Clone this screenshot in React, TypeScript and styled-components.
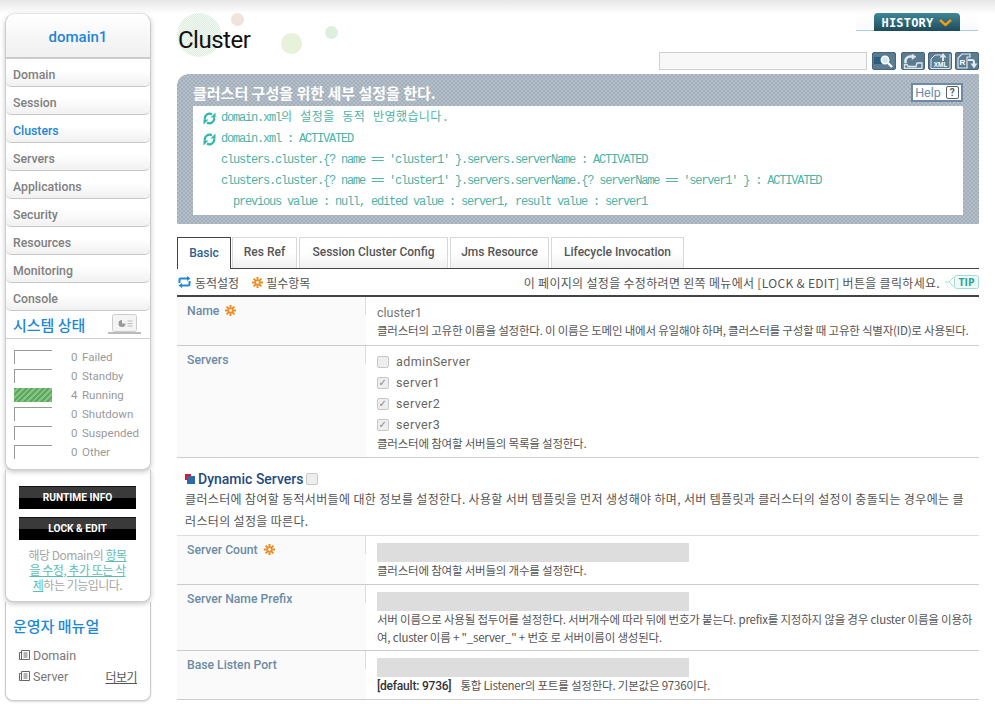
import React from "react";
import styled, { createGlobalStyle } from "styled-components";

const BASE = `Roboto, "Noto Sans CJK KR", sans-serif`;
const KR = `"Noto Sans CJK KR", Roboto, sans-serif`;
const MONO = `"Liberation Mono", "Noto Sans CJK KR", monospace`;

const Global = createGlobalStyle`
  html, body { margin: 0; padding: 0; height: 704px; overflow: hidden; background: #fff; }
  body {
    font-family: ${BASE};
    font-size: 12px;
    background: linear-gradient(#e6e6e6, #fff) no-repeat 0 0 / 100% 14px #fff;
  }
  * { box-sizing: border-box; }
`;

const Page = styled.div`
  display: flex;
  align-items: flex-start;
  padding: 13px 16px 0 5px;
  gap: 26px;
  width: 995px;
`;

const Sidebar = styled.aside`
  width: 146px;
  flex: none;
  display: flex;
  flex-direction: column;
`;
const NavCard = styled.div`
  background: #fff;
  border: 1px solid #ccc;
  border-top: 1px solid #e5e5e5;
  border-radius: 10px 10px 8px 8px;
  box-shadow: 0 2px 5px rgba(0, 0, 0, 0.22);
  position: relative;
  z-index: 2;
`;
const DomainHead = styled.div`
  height: 45px;
  padding-top: 2px;
  display: flex;
  align-items: center;
  justify-content: center;
  color: #1c87d8;
  font: 500 15px ${BASE};
  border-radius: 10px 10px 0 0;
  border-bottom: 2px solid #ccc;
  background: linear-gradient(#fff, #f0f0f0);
`;
const NavItem = styled.div<{ $active?: boolean }>`
  height: 28px;
  padding: 4px 0 0 7px;
  display: flex;
  align-items: center;
  font: 500 12.3px ${BASE};
  color: ${(p) => (p.$active ? "#1c87d8" : "#808080")};
  background: linear-gradient(#fff 40%, #f1f1f1);
  border-bottom: 1px solid #c8c8c8;
  border-radius: 0 0 5px 5px;
`;
const StatusHead = styled.div`
  height: 28px;
  border-bottom: 1px solid #d0d0d0;
  display: flex;
  align-items: center;
  justify-content: space-between;
  padding: 0 9px 1px 7px;
  color: #1c87d8;
  font: 500 15px ${KR};
`;
const StatusList = styled.div`
  padding: 11px 0 10px 8px;
  display: flex;
  flex-direction: column;
  gap: 5px;
`;
const StatusRow = styled.div`
  display: flex;
  align-items: center;
  height: 14px;
  color: #9a9a9a;
  font-size: 11.5px;
`;
const Bar = styled.div<{ $on?: boolean }>`
  width: 38px;
  height: 14px;
  border-top: 1px solid #999;
  border-left: 1px solid #999;
  margin-right: 19px;
  ${(p) =>
    p.$on
      ? `border: 0; background: repeating-linear-gradient(135deg,#5fa85f 0 2px,#86c586 2px 4px);`
      : ""}
`;
const Count = styled.span`
  width: 11px;
  margin-bottom: 1px;
`;
const StatusName = styled.span`
  margin-bottom: 1px;
`;

const ActionCard = styled.div`
  background: #fff;
  border: 1px solid #ccc;
  border-top: 0;
  border-radius: 0 0 8px 8px;
  box-shadow: 0 2px 5px rgba(0, 0, 0, 0.22);
  padding: 16px 1px 9px 0;
  display: flex;
  flex-direction: column;
  align-items: center;
  gap: 8px;
  position: relative;
  z-index: 1;
`;
const BlackButton = styled.div`
  width: 117px;
  height: 23px;
  border-top: 1px solid #111;
  background: linear-gradient(#3a3a3a 50%, #000 50%);
  color: #fff;
  font: 700 10.2px/22px ${BASE};
  text-align: center;
`;
const ActionNote = styled.p`
  margin: -1px 0 0;
  width: 104px;
  text-align: center;
  color: #a5a5a5;
  font: 12px/15px ${KR};
  letter-spacing: -0.5px;
  a {
    color: #5cbdb5;
    text-decoration: underline;
  }
`;
const ManualCard = styled.div`
  background: #fff;
  border: 1px solid #ccc;
  border-top: 0;
  border-radius: 0 0 8px 8px;
  height: 99px;
  padding: 14px 13px 0 7px;
  box-shadow: 0 1px 2px rgba(0, 0, 0, 0.15);
`;
const ManualTitle = styled.div`
  color: #1c87d8;
  font: 500 15px/20px ${KR};
  margin-bottom: 9px;
`;
const ManualRow = styled.div`
  display: flex;
  align-items: center;
  gap: 3px;
  height: 21px;
  padding-left: 6px;
  color: #777;
  font-size: 12.5px;
`;
const More = styled.span`
  margin-left: auto;
  color: #555;
  text-decoration: underline;
  font: 12px ${KR};
  letter-spacing: -0.5px;
`;

const Main = styled.main`
  width: 802px;
  flex: none;
`;
const Header = styled.header`
  position: relative;
  height: 61px;
  display: flex;
  flex-direction: column;
  align-items: flex-end;
`;
const Title = styled.h1`
  position: absolute;
  left: 1px;
  top: 11px;
  margin: 0;
  color: #111;
  font: 400 24px/32px ${BASE};
  letter-spacing: -0.5px;
  z-index: 1;
`;
const Dot = styled.span<{ $x: number; $y: number; $s: number; $c: string }>`
  position: absolute;
  left: ${(p) => p.$x}px;
  top: ${(p) => p.$y}px;
  width: ${(p) => p.$s}px;
  height: ${(p) => p.$s}px;
  border-radius: 50%;
  background: ${(p) => p.$c};
`;
const BigDot = styled(Dot)`
  background: repeating-conic-gradient(#dbecdd 0 25%, #f6faf6 0 50%) 0 0 / 2px 2px;
`;
const HistoryWrap = styled.div`
  width: 122px;
  margin-right: 1px;
  height: 18px;
  display: flex;
  justify-content: center;
  border-bottom: 1px solid #a8d0dc;
  background: linear-gradient(#fff, #fafafa);
`;
const HistoryTab = styled.div`
  width: 86px;
  height: 18px;
  padding-top: 1px;
  display: flex;
  align-items: center;
  justify-content: center;
  gap: 6px;
  border-radius: 4px 4px 0 0;
  background: linear-gradient(#3f8799, #1d4b5b);
  color: #fff;
  font: 700 12px "DejaVu Sans Mono", monospace;
  letter-spacing: 0.2px;
`;
const Tools = styled.div`
  margin-top: 21px;
  display: flex;
  align-items: center;
`;
const Search = styled.input`
  width: 208px;
  height: 18px;
  border: 1px solid #d0d0d0;
  background: #f8f8f8;
  margin-right: 5px;
  padding: 0;
`;
const ToolButton = styled.div<{ $gap?: number }>`
  width: 24px;
  height: 18px;
  border-radius: 2px;
  background: #5b7c90;
  border: 1px solid #46657a;
  margin-left: ${(p) => p.$gap ?? 0}px;
  display: flex;
  align-items: center;
  justify-content: center;
`;

const Notice = styled.section`
  position: relative;
  height: 150px;
  border-radius: 12px 0 0 0;
  padding: 9px 16px;
  background: repeating-conic-gradient(#a3afba 0 25%, #b5bfc9 0 50%) 0 0 / 4px 4px;
  display: flex;
  flex-direction: column;
`;
const NoticeTitle = styled.div`
  color: #fff;
  font: 700 15px/20px ${KR};
  margin-bottom: 3px;
`;
const HelpButton = styled.div`
  position: absolute;
  right: 16px;
  top: 9px;
  width: 52px;
  height: 19px;
  background: #fff;
  border: 2px solid #6e8aa8;
  color: #6e8aa8;
  font-size: 12.5px;
  display: flex;
  align-items: center;
  justify-content: center;
  gap: 5px;
`;
const QMark = styled.span`
  width: 13px;
  height: 13px;
  border: 1px solid #56616b;
  border-radius: 2px;
  color: #56616b;
  font: 700 10px/11px ${BASE};
  text-align: center;
`;
const NoticeBody = styled.div`
  background: #fff;
  height: 109px;
  padding: 1px 10px;
`;
const Line = styled.div<{ $tone: "ok" | "sub" | "deep" }>`
  height: 21px;
  padding-top: 2px;
  display: flex;
  align-items: center;
  font: 12px/19px ${MONO};
  letter-spacing: -1.2px;
  white-space: pre;
  color: #4cb3a6;
  padding-left: ${(p) => (p.$tone === "ok" ? 0 : p.$tone === "sub" ? 18 : 30)}px;
  svg {
    margin-right: 5px;
    flex: none;
  }
`;
const KoreanRun = styled.span`
  letter-spacing: 0.45px;
  font-size: 12px;
`;

const Tabs = styled.nav`
  margin-top: 13px;
  height: 32px;
  display: flex;
  align-items: flex-end;
  gap: 2px;
  border-bottom: 1px solid #444;
`;
const Tab = styled.div<{ $w: number; $on?: boolean }>`
  width: ${(p) => p.$w}px;
  margin-bottom: ${(p) => (p.$on ? -1 : 0)}px;
  height: ${(p) => (p.$on ? 32 : 31)}px;
  padding-bottom: 2px;
  display: flex;
  align-items: center;
  justify-content: center;
  font: 500 12px ${BASE};
  color: ${(p) => (p.$on ? "#2f5f8f" : "#555")};
  background: linear-gradient(#fff 50%, ${(p) => (p.$on ? "#fff" : "#f0f0f2")});
  border: ${(p) => (p.$on ? "1px solid #444" : "1px solid #d8d8d8")};
  border-bottom: none;
  &:first-child {
    margin-right: -1px;
  }
`;
const LegendBar = styled.div`
  height: 28px;
  display: flex;
  align-items: center;
  border-bottom: 2px solid #444;
  color: #555;
  font: 12px ${KR};
`;
const Legend = styled.span`
  display: flex;
  align-items: center;
  gap: 3px;
  margin-right: 13px;
  letter-spacing: 0;
  &:first-child {
    padding-left: 1px;
    gap: 4px;
  }
`;
const LegendNote = styled.span`
  margin-left: auto;
  letter-spacing: 0.31px;
  margin-right: 5px;
`;
const Row = styled.div<{ $h: number }>`
  display: flex;
  height: ${(p) => p.$h}px;
  border-bottom: 1px solid #ccc;
`;
const Label = styled.div`
  width: 189px;
  flex: none;
  background: #fafafa;
  padding: 5px 10px;
  color: #6c8ba5;
  font: 500 12.2px/18px ${BASE};
  display: flex;
  align-items: flex-start;
  gap: 6px;
  position: relative;
  svg {
    margin-top: 3px;
  }
  &::after {
    content: "";
    position: absolute;
    right: 0;
    top: 0;
    width: 1px;
    height: 18px;
    background: #ddd;
  }
`;
const Value = styled.div<{ $top?: number }>`
  flex: 1;
  padding: ${(p) => p.$top ?? 7}px 6px 0 11px;
  color: #666;
`;
const Plain = styled.div`
  font-size: 12.5px;
  line-height: 17px;
  color: #777;
`;
const Desc = styled.p`
  margin: 0;
  font: 11.5px/18px ${KR};
  color: #555;
  letter-spacing: -0.21px;
`;
const Check = styled.label`
  display: flex;
  align-items: center;
  gap: 7px;
  height: 21px;
  font-size: 12.5px;
  color: #666;
  letter-spacing: 0.4px;
  &:last-of-type {
    margin-bottom: -1px;
  }
`;
const Box = styled.span`
  width: 12px;
  height: 12px;
  flex: none;
  border: 1px solid #c8c8c8;
  border-radius: 2px;
  background: #eee;
  color: #888;
  font: 700 10px/10px "DejaVu Sans", sans-serif;
  text-align: center;
`;
const Section = styled.div`
  padding: 11px 8px 0 8px;
  height: 78px;
  border-bottom: 1px solid #ddd;
`;
const SectionTitle = styled.h2`
  margin: 0;
  display: flex;
  align-items: center;
  gap: 3px;
  height: 19px;
  color: #1f4b7e;
  font: 500 14px ${BASE};
`;
const SectionDesc = styled.p`
  margin: 0;
  font: 12px/22px ${KR};
  color: #555;
  letter-spacing: 0.34px;
`;
const Disabled = styled.div`
  width: 312px;
  height: 19px;
  background: #ddd;
  margin-bottom: -1px;
`;
const Bold = styled.span`
  color: #333;
  font: 500 12px ${BASE};
  margin-right: 9px;
`;

const Gear = () => (
  <svg width="11" height="11" viewBox="0 0 11 11">
    <g stroke="#f08a1d" strokeWidth="2">
      <path d="M5.5 0v11M0 5.5h11M1.6 1.6l7.8 7.8M9.4 1.6l-7.8 7.8" />
    </g>
    <circle cx="5.5" cy="5.5" r="1.4" fill="#fff" />
  </svg>
);
const Sync = ({ c = "#2fb8a8" }: { c?: string }) => (
  <svg width="13" height="13" viewBox="0 0 13 13" fill="none">
    <path d="M2 7.5a4.6 4.6 0 0 1 7-5" stroke={c} strokeWidth="2.2" />
    <path d="M11 5.5a4.6 4.6 0 0 1-7 5" stroke={c} strokeWidth="2.2" />
    <path d="M7.5 5.5h5V.5zM5.5 7.5h-5v5z" fill={c} />
  </svg>
);
const Doc = () => (
  <svg width="11" height="11" viewBox="0 0 11 11" fill="none" stroke="#666">
    <path d="M2.5.5h8v9h-8zM.5 2.5h2v7h-2zM4.5 3h4M4.5 5h4M4.5 7h4" />
  </svg>
);
const Laptop = () => (
  <svg width="33" height="21" viewBox="0 0 33 21" style={{ flex: "none" }}>
    <rect x="4.5" y="0.5" width="24" height="17" rx="2" fill="#f4f4f4" stroke="#ccc" />
    <path d="M14 6a3.5 3.5 0 1 0 3.5 3.5H14z" fill="#999" />
    <path d="M19.5 7h5M19.5 9.5h5M19.5 12h5" stroke="#bbb" />
    <path d="M0 18h33v2H0z" fill="#bbb" />
  </svg>
);
const SearchIcon = () => (
  <svg width="20" height="14" viewBox="0 0 20 14" fill="none">
    <rect x="0" y="3" width="9" height="7" fill="#2f5d7e" />
    <circle cx="11" cy="6" r="3.7" fill="#cfe6f5" stroke="#fff" strokeWidth="1.5" />
    <path d="M14 9l4 4" stroke="#fff" strokeWidth="2.4" />
  </svg>
);
const ReloadIcon = () => (
  <svg width="20" height="15" viewBox="0 0 20 15" fill="none" stroke="#dfe8ee">
    <path d="M9 2.5H7a4.5 4.5 0 0 0-4.5 4.5v2" strokeWidth="2.6" />
    <path d="M9 0v5.5L13 2.7z" fill="#dfe8ee" strokeWidth="0.5" />
    <path d="M1.5 10.5h2.5l1 2h8l1-3.5 5 0v5.5H1.5z" strokeWidth="1.3" />
  </svg>
);
const XmlIcon = () => (
  <svg width="21" height="16" viewBox="0 0 21 16" fill="none" stroke="#dfe8ee">
    <path d="M1 6l4-4h6M1 6v9.5h19V1" strokeWidth="1" />
    <path d="M13 2v6" strokeWidth="2" />
    <path d="M9.5 4.5L13 0l3.5 4.5z" fill="#dfe8ee" strokeWidth="0" />
    <text x="10.5" y="14.3" textAnchor="middle" fontSize="6.5" fontWeight="700" fill="#fff" stroke="none" fontFamily="Liberation Sans">XML</text>
  </svg>
);
const ResIcon = () => (
  <svg width="21" height="16" viewBox="0 0 21 16" fill="none" stroke="#dfe8ee">
    <path d="M5 1h8v3h-3v11H1V5z" strokeWidth="1.2" />
    <text x="5.5" y="12" textAnchor="middle" fontSize="8" fontWeight="700" fill="#fff" stroke="none" fontFamily="Liberation Sans">R</text>
    <path d="M11 7h4a2 2 0 0 1 2 2v2" strokeWidth="2" />
    <path d="M13.5 10.5h7L17 15.5z" fill="#dfe8ee" strokeWidth="0" />
  </svg>
);
const BlueSync = () => (
  <svg width="13" height="12" viewBox="0 0 13 12" fill="none">
    <path d="M1.5 7V3.5a1 1 0 0 1 1-1h7M11.5 5v3.5a1 1 0 0 1-1 1h-7" stroke="#1c87e0" strokeWidth="2" />
    <path d="M9 0l3.5 2.5L9 5zM4 7L.5 9.5 4 12z" fill="#1c87e0" />
  </svg>
);
const TipBadge = () => (
  <svg width="34" height="14" viewBox="0 0 34 14">
    <path d="M0 7h4l5-5M4 7l5 5" fill="none" stroke="#a7dcd4" />
    <rect x="9.5" y="0.5" width="24" height="13" rx="2" fill="#eefaf8" stroke="#a7dcd4" />
    <text x="21.5" y="11" textAnchor="middle" fontSize="10.5" fontWeight="700" fill="#2aa294" fontFamily="Open Sans">TIP</text>
  </svg>
);
const Squares = () => (
  <svg width="10" height="10" viewBox="0 0 10 10">
    <rect x="0" y="0" width="6" height="6" fill="#e0182d" />
    <rect x="2" y="2" width="8" height="8" fill="#2b6ca8" />
  </svg>
);
const Chevron = () => (
  <svg width="13" height="8" viewBox="0 0 13 8" fill="none">
    <path d="M1 1l5.5 5L12 1" stroke="#f59a12" strokeWidth="2.4" />
  </svg>
);

const nav = ["Domain", "Session", "Clusters", "Servers", "Applications", "Security", "Resources", "Monitoring", "Console"];
const statuses: [string, number][] = [["Failed", 0], ["Standby", 0], ["Running", 4], ["Shutdown", 0], ["Suspended", 0], ["Other", 0]];
const tabs: [string, number][] = [["Basic", 54], ["Res Ref", 65], ["Session Cluster Config", 149], ["Jms Resource", 99], ["Lifecycle Invocation", 133]];

export default function App() {
  return (
    <>
      <Global />
      <Page>
        <Sidebar>
          <NavCard>
            <DomainHead>domain1</DomainHead>
            {nav.map((n) => (
              <NavItem key={n} $active={n === "Clusters"}>{n}</NavItem>
            ))}
            <StatusHead>
              시스템 상태
              <Laptop />
            </StatusHead>
            <StatusList>
              {statuses.map(([name, n]) => (
                <StatusRow key={name}>
                  <Bar $on={n > 0} />
                  <Count>{n}</Count>
                  <StatusName>{name}</StatusName>
                </StatusRow>
              ))}
            </StatusList>
          </NavCard>
          <ActionCard>
            <BlackButton>RUNTIME INFO</BlackButton>
            <BlackButton>LOCK &amp; EDIT</BlackButton>
            <ActionNote>
              해당 Domain의 <a>항목을 수정, 추가 또는 삭제</a>하는 기능입니다.
            </ActionNote>
          </ActionCard>
          <ManualCard>
            <ManualTitle>운영자 매뉴얼</ManualTitle>
            <ManualRow><Doc />Domain</ManualRow>
            <ManualRow><Doc />Server<More>더보기</More></ManualRow>
          </ManualCard>
        </Sidebar>
        <Main>
          <Header>
            <BigDot $x={0} $y={0} $s={44} $c="" />
            <Dot $x={54} $y={0} $s={13} $c="#efe3dc" />
            <Dot $x={104} $y={20} $s={21} $c="#e8f1d9" />
            <Dot $x={148} $y={13} $s={13} $c="#dcf0dc" />
            <Title>Cluster</Title>
            <HistoryWrap>
              <HistoryTab>HISTORY<Chevron /></HistoryTab>
            </HistoryWrap>
            <Tools>
              <Search readOnly />
              <ToolButton><SearchIcon /></ToolButton>
              <ToolButton $gap={5}><ReloadIcon /></ToolButton>
              <ToolButton $gap={3}><XmlIcon /></ToolButton>
              <ToolButton $gap={3}><ResIcon /></ToolButton>
            </Tools>
          </Header>
          <Notice>
            <NoticeTitle>클러스터 구성을 위한 세부 설정을 한다.</NoticeTitle>
            <HelpButton>Help<QMark>?</QMark></HelpButton>
            <NoticeBody>
              <Line $tone="ok"><Sync /><span>domain.xml<KoreanRun>의 설정을 동적 반영했습니다.</KoreanRun></span></Line>
              <Line $tone="ok"><Sync />domain.xml : ACTIVATED</Line>
              <Line $tone="sub">clusters.cluster.{"{"}? name == 'cluster1' {"}"}.servers.serverName : ACTIVATED</Line>
              <Line $tone="sub">clusters.cluster.{"{"}? name == 'cluster1' {"}"}.servers.serverName.{"{"}? serverName == 'server1' {"}"} : ACTIVATED</Line>
              <Line $tone="deep">previous value : null, edited value : server1, result value : server1</Line>
            </NoticeBody>
          </Notice>
          <Tabs>
            {tabs.map(([t, w], i) => (
              <Tab key={t} $w={w} $on={i === 0}>{t}</Tab>
            ))}
          </Tabs>
          <LegendBar>
            <Legend><BlueSync />동적설정</Legend>
            <Legend><Gear />필수항목</Legend>
            <LegendNote>이 페이지의 설정을 수정하려면 왼쪽 메뉴에서 [LOCK &amp; EDIT] 버튼을 클릭하세요.</LegendNote>
            <TipBadge />
          </LegendBar>
          <Row $h={49}>
            <Label>Name <Gear /></Label>
            <Value>
              <Plain>cluster1</Plain>
              <Desc>클러스터의 고유한 이름을 설정한다. 이 이름은 도메인 내에서 유일해야 하며, 클러스터를 구성할 때 고유한 식별자(ID)로 사용된다.</Desc>
            </Value>
          </Row>
          <Row $h={112}>
            <Label>Servers</Label>
            <Value $top={5}>
              <Check><Box />adminServer</Check>
              <Check><Box>✓</Box>server1</Check>
              <Check><Box>✓</Box>server2</Check>
              <Check><Box>✓</Box>server3</Check>
              <Desc>클러스터에 참여할 서버들의 목록을 설정한다.</Desc>
            </Value>
          </Row>
          <Section>
            <SectionTitle><Squares />Dynamic Servers <Box /></SectionTitle>
            <SectionDesc>클러스터에 참여할 동적서버들에 대한 정보를 설정한다. 사용할 서버 템플릿을 먼저 생성해야 하며, 서버 템플릿과 클러스터의 설정이 충돌되는 경우에는 클러스터의 설정을 따른다.</SectionDesc>
          </Section>
          <Row $h={49}>
            <Label>Server Count <Gear /></Label>
            <Value>
              <Disabled />
              <Desc>클러스터에 참여할 서버들의 개수를 설정한다.</Desc>
            </Value>
          </Row>
          <Row $h={66}>
            <Label>Server Name Prefix</Label>
            <Value>
              <Disabled />
              <Desc>서버 이름으로 사용될 접두어를 설정한다. 서버개수에 따라 뒤에 번호가 붙는다. prefix를 지정하지 않을 경우 cluster 이름을 이용하여, cluster 이름 + "_server_" + 번호 로 서버이름이 생성된다.</Desc>
            </Value>
          </Row>
          <Row $h={49}>
            <Label>Base Listen Port</Label>
            <Value>
              <Disabled />
              <Desc><Bold>[default: 9736]</Bold>통합 Listener의 포트를 설정한다. 기본값은 9736이다.</Desc>
            </Value>
          </Row>
        </Main>
      </Page>
    </>
  );
}
